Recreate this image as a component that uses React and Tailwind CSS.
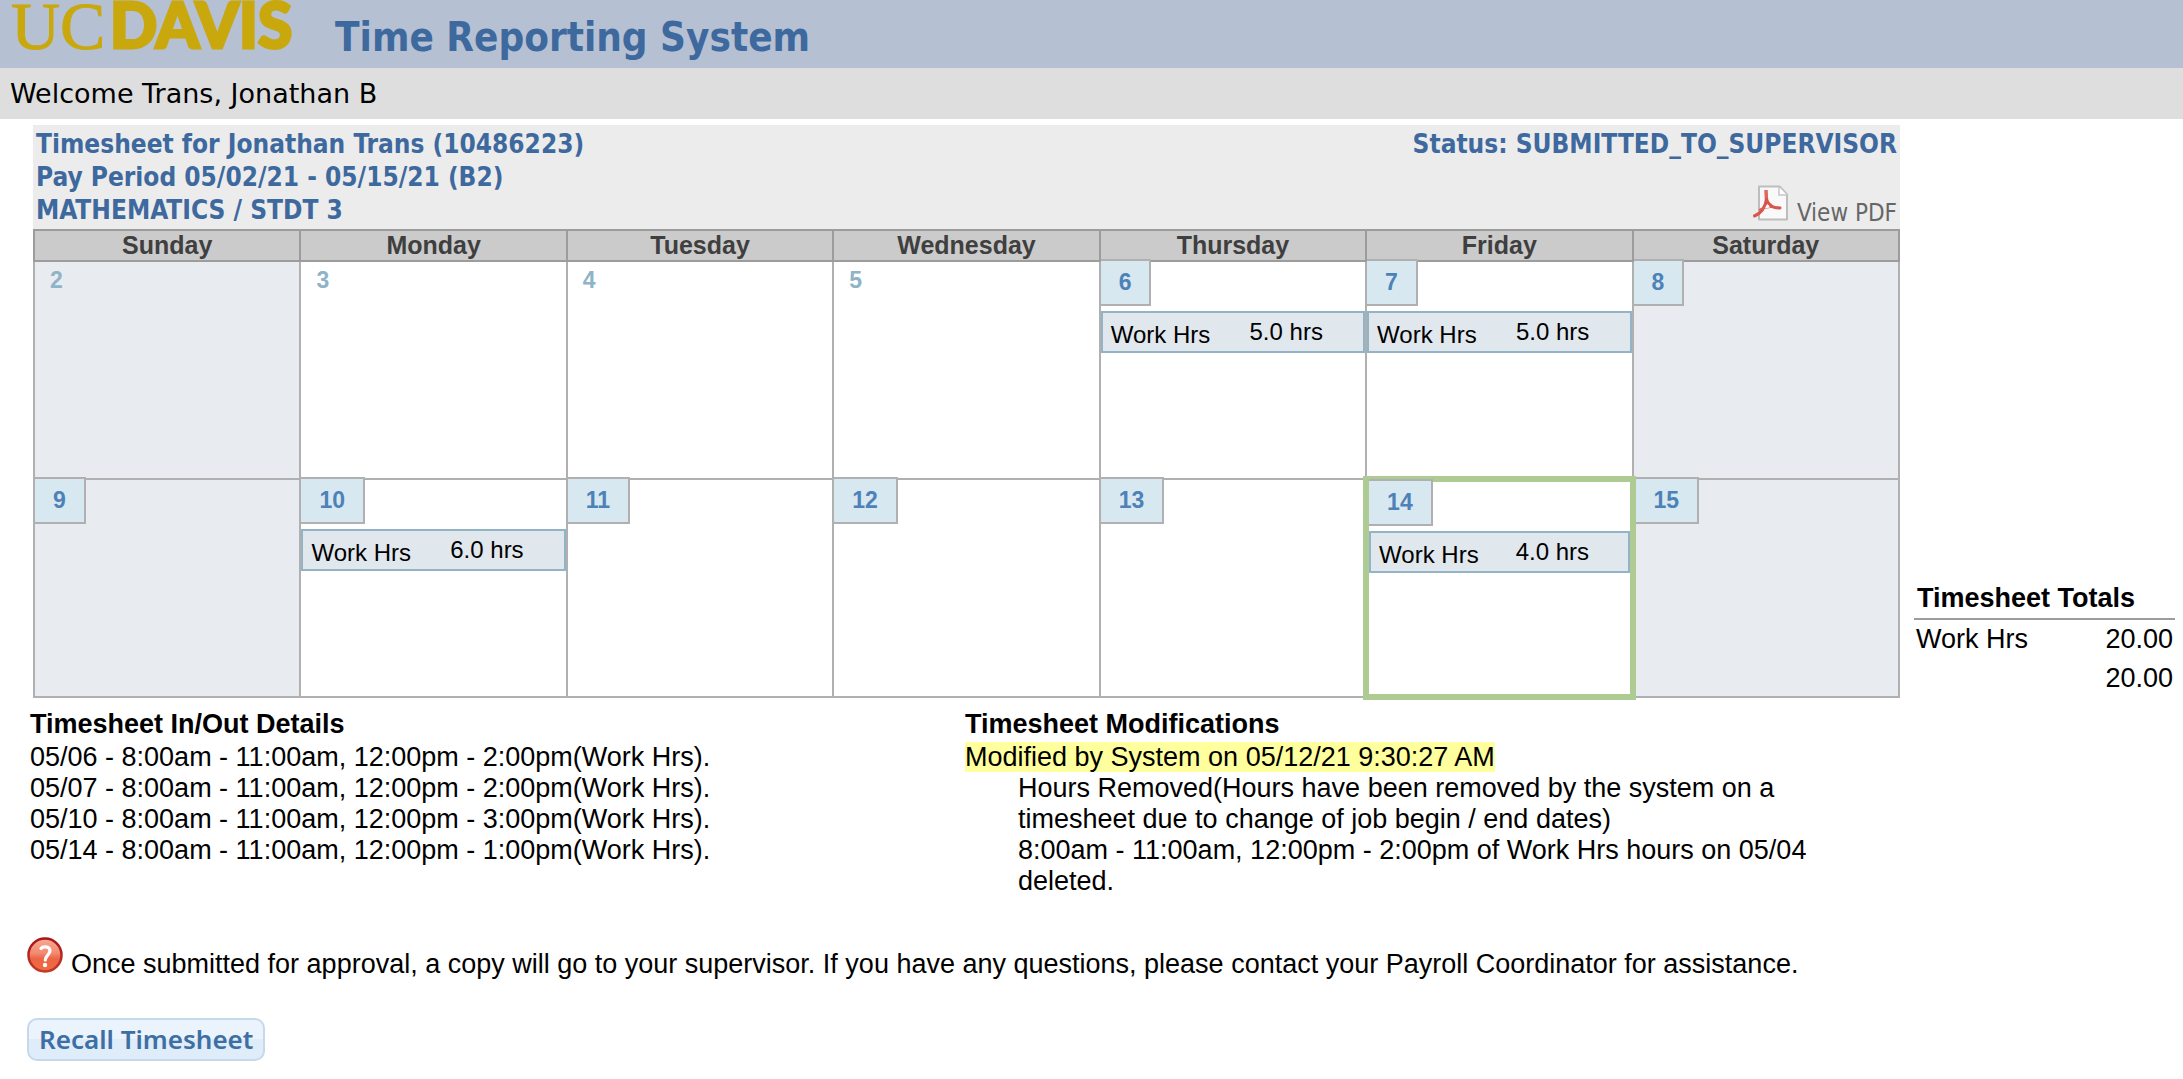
import React from "react";

const DAYS = ["Sunday", "Monday", "Tuesday", "Wednesday", "Thursday", "Friday", "Saturday"];

const WEEKS = [
  [
    { day: 2, weekend: true },
    { day: 3 },
    { day: 4 },
    { day: 5 },
    { day: 6, active: true, hours: "5.0 hrs" },
    { day: 7, active: true, hours: "5.0 hrs" },
    { day: 8, active: true, weekend: true },
  ],
  [
    { day: 9, active: true, weekend: true },
    { day: 10, active: true, hours: "6.0 hrs" },
    { day: 11, active: true },
    { day: 12, active: true },
    { day: 13, active: true },
    { day: 14, active: true, hours: "4.0 hrs", today: true },
    { day: 15, active: true, weekend: true },
  ],
];

const DETAILS = [
  "05/06 - 8:00am - 11:00am, 12:00pm - 2:00pm(Work Hrs).",
  "05/07 - 8:00am - 11:00am, 12:00pm - 2:00pm(Work Hrs).",
  "05/10 - 8:00am - 11:00am, 12:00pm - 3:00pm(Work Hrs).",
  "05/14 - 8:00am - 11:00am, 12:00pm - 1:00pm(Work Hrs).",
];

function Logo() {
  return (
    <svg viewBox="0 0 300 60" className="h-[60px] w-[300px] shrink-0 overflow-visible" fill="#c9a80e" role="img" aria-label="UC Davis">
      <text x="11" y="49" fontFamily="Liberation Serif, serif" fontSize="68" stroke="#c9a80e" strokeWidth="1">UC</text>
      <text x="110" y="48" fontFamily="Lato, sans-serif" fontSize="62" fontWeight="900" stroke="#c9a80e" strokeWidth="3">DAVIS</text>
    </svg>
  );
}

function PdfIcon() {
  return (
    <svg viewBox="0 0 36 36" className="size-9" fill="none" aria-hidden="true">
      <path d="M6 1.5h20.500l7.500 8v25H6z" fill="#f9f9f9" stroke="#bdbdbd" strokeWidth="2" strokeLinejoin="round" />
      <path d="M26 2v8h8" fill="#fff" stroke="#c6c6c6" strokeWidth="1.500" />
      <path d="M13 5c0 5 .3 10 1.500 15" stroke="#e0685f" strokeWidth="3.500" />
      <path d="M13.500 14c-1 7-5 14-12 17" stroke="#d9564d" strokeWidth="3" strokeLinecap="round" />
      <path d="M6 25c6-3.500 13-4 22-2" stroke="#dd5d54" strokeWidth="2" />
      <path d="M14 16c3 5 7 7.500 13 7" stroke="#d9564d" strokeWidth="3" strokeLinecap="round" />
      <path d="M14.500 19l2.500 3.500-5 .7z" fill="#fff" />
    </svg>
  );
}

function HelpIcon() {
  return (
    <svg viewBox="0 0 36 36" className="size-9 shrink-0" aria-hidden="true">
      <defs>
        <linearGradient id="helpFill" x1="0" y1="0" x2="0" y2="1">
          <stop offset="0" stopColor="#f8a994" />
          <stop offset=".45" stopColor="#f28a70" />
          <stop offset=".6" stopColor="#ec6647" />
          <stop offset="1" stopColor="#f06a40" />
        </linearGradient>
        <linearGradient id="helpRing" x1="0" y1="0" x2="0" y2="1">
          <stop offset="0" stopColor="#a8141a" />
          <stop offset="1" stopColor="#c23a28" />
        </linearGradient>
      </defs>
      <circle cx="18" cy="18" r="16.500" fill="url(#helpFill)" stroke="url(#helpRing)" strokeWidth="2.500" />
      <path d="M14 11.500c1.500-2 8.500-3 9 2 .3 4-4.500 4.500-4.700 9.500" fill="none" stroke="#fff" strokeWidth="3.200" strokeLinecap="round" />
      <circle cx="18" cy="28" r="2.200" fill="#fff" />
    </svg>
  );
}

function DayCell({ cell }) {
  const edge = cell.today ? "border-[6px] border-[#adcb92]" : "border-2 border-[#b0b0b0]";
  const fill = cell.weekend ? "bg-[#e8ebf0]" : "bg-white";
  return (
    <td className={`h-[218px] p-0 align-top ${edge} ${fill}`}>
      {cell.active ? (
        <span className="relative -mt-[3px] block w-fit border-y-2 border-r-2 border-[#b0b0b0] bg-[#d8e8f0] px-[18px] text-[23px] leading-[43px] font-bold text-[#4d82b8]">
          {cell.day}
        </span>
      ) : (
        <span className="block pl-[15px] text-[23px] leading-9 font-bold text-[#8fb3c8]">{cell.day}</span>
      )}
      {cell.hours && (
        <div className="mt-[5px] flex h-[42px] items-center border-2 border-[#93b3c7] bg-[#e0e7ed] pl-2 text-[24px]">
          <span className="w-[55%] self-end leading-8">Work Hrs</span>
          <span className="leading-8">{cell.hours}</span>
        </div>
      )}
    </td>
  );
}

export default function App() {
  return (
    <div className="min-h-screen bg-white font-['Liberation_Sans',Arial,sans-serif] text-[27px] leading-[31px] text-black">
      <header className="flex h-[68px] items-start bg-[#b5c0d3]">
        <Logo />
        <h1 className="ml-[35px] pt-1.5 font-['DejaVu_Sans_Condensed','DejaVu_Sans',sans-serif] text-[40px] leading-[62px] font-bold whitespace-nowrap text-[#3d699e]">
          Time Reporting System
        </h1>
      </header>
      <div className="bg-[#dedede] pl-2.5 font-['DejaVu_Sans',sans-serif] leading-[51px]">Welcome Trans, Jonathan B</div>

      <main className="pt-1.5">
        <div className="grid grid-cols-[minmax(0,1fr)_261px] gap-x-3.5 pr-2 pl-[30px]">
          <div className="pl-[3px]">
            <div className="flex justify-between bg-[#ececec] px-[3px] pt-[3px] pb-[2px] font-['DejaVu_Sans_Condensed','DejaVu_Sans',sans-serif] text-[26px] leading-[33px] font-bold text-[#3d699e]">
              <h2>
                Timesheet for Jonathan Trans (10486223)
                <br />
                Pay Period 05/02/21 - 05/15/21 (B2)
                <br />
                MATHEMATICS / STDT 3
              </h2>
              <div className="flex flex-col items-end justify-between">
                <p>Status: SUBMITTED_TO_SUPERVISOR</p>
                <a href="#pdf" className="flex items-baseline gap-2 text-[24px] leading-7 font-normal text-[#666]">
                  <PdfIcon />
                  View PDF
                </a>
              </div>
            </div>
            <table className="w-full table-fixed border-collapse">
              <thead>
                <tr>
                  {DAYS.map((d) => (
                    <th key={d} className="border-2 border-[#9c9c9c] bg-[#cbcbcb] p-0 text-[25px] leading-[29px] text-[#3f3f3f]">
                      {d}
                    </th>
                  ))}
                </tr>
              </thead>
              <tbody>
                {WEEKS.map((week) => (
                  <tr key={week[0].day}>
                    {week.map((cell) => (
                      <DayCell key={cell.day} cell={cell} />
                    ))}
                  </tr>
                ))}
              </tbody>
            </table>
          </div>

          <table className="mb-[2px] w-full self-end">
            <thead>
              <tr>
                <th colSpan={2} className="border-b-2 border-[#9c9c9c] pb-1 pl-[3px] text-left leading-8">
                  Timesheet Totals
                </th>
              </tr>
            </thead>
            <tbody className="leading-[39px]">
              <tr>
                <td className="pl-[2px]">Work Hrs</td>
                <td className="pr-[2px] text-right">20.00</td>
              </tr>
              <tr>
                <td />
                <td className="pr-[2px] text-right">20.00</td>
              </tr>
            </tbody>
          </table>

          <div className="grid grid-cols-2 pt-1.5">
            <section>
              <h3 className="leading-9 font-bold">Timesheet In/Out Details</h3>
              {DETAILS.map((line) => (
                <p key={line}>{line}</p>
              ))}
            </section>
            <section>
              <h3 className="leading-9 font-bold">Timesheet Modifications</h3>
              <p>
                <mark className="bg-[#ffff9e] text-black">Modified by System on 05/12/21 9:30:27 AM</mark>
              </p>
              <div className="px-[53px]">
                <p>Hours Removed(Hours have been removed by the system on a timesheet due to change of job begin / end dates)</p>
                <p>8:00am - 11:00am, 12:00pm - 2:00pm of Work Hrs hours on 05/04 deleted.</p>
              </div>
            </section>
          </div>
        </div>

        <div className="mt-10 flex items-baseline gap-2 pl-[27px]">
          <HelpIcon />
          <p className="leading-7">
            Once submitted for approval, a copy will go to your supervisor. If you have any questions, please contact your Payroll
            Coordinator for assistance.
          </p>
        </div>

        <button
          type="button"
          className="mt-10 ml-[27px] rounded-[10px] border-2 border-[#c6d9ea] bg-linear-to-b from-[#ebf3fc] from-50% to-[#dfecfa] to-50% px-2.5 font-['Noto_Sans',sans-serif] text-[26px] leading-[39px] font-semibold text-[#3d6fa3]"
        >
          Recall Timesheet
        </button>
      </main>
    </div>
  );
}
